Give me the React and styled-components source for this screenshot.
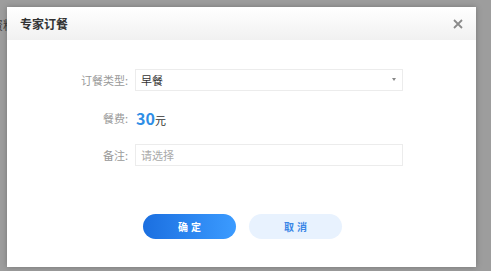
import React from 'react';
import styled, { createGlobalStyle } from 'styled-components';

const GlobalStyle = createGlobalStyle`
  html, body {
    margin: 0;
    padding: 0;
    background: #9d9d9d;
    font-family: "Noto Sans CJK SC", "Noto Sans", "Liberation Sans", sans-serif;
  }
`;

const Stage = styled.div`
  position: relative;
  width: 491px;
  height: 271px;
  overflow: hidden;
  background: #9d9d9d;
  padding: 7px 0 0 7px;
  box-sizing: border-box;
`;

// page text showing through the overlay
const BackText = styled.span`
  position: absolute;
  left: -9px;
  top: 16px;
  font-size: 12px;
  color: #3c3c3c;
`;

const Dialog = styled.div`
  position: relative;
  width: 469px;
  height: 260px;
  background: #fff;
  box-shadow: 0 0 6px rgba(0, 0, 0, 0.25);
  display: flex;
  flex-direction: column;
`;

const Header = styled.div`
  height: 33px;
  display: flex;
  align-items: center;
  justify-content: space-between;
  padding: 0 12px 0 13px;
  background: linear-gradient(#ffffff, #f1f1f1);
`;

const Title = styled.h1`
  margin: 0;
  font-size: 12px;
  font-weight: bold;
  color: #333;
`;

const CloseButton = styled.button`
  border: none;
  background: none;
  padding: 0;
  width: 12px;
  height: 12px;
  display: flex;
  align-items: center;
  justify-content: center;
  cursor: pointer;
`;

const Form = styled.div`
  display: flex;
  flex-direction: column;
  padding-top: 29px;
`;

const Row = styled.div`
  display: flex;
  align-items: center;
  height: ${(p) => p.h || 22}px;
  margin-bottom: ${(p) => p.mb || 0}px;
`;

const Label = styled.span`
  width: 121px;
  text-align: right;
  font-size: 11px;
  color: #999;
  margin-right: 7px;
`;

const Field = styled.div`
  width: 268px;
  height: 22px;
  box-sizing: border-box;
  border: 1px solid #ececec;
  display: flex;
  align-items: center;
  justify-content: space-between;
  padding: 0 6px 0 5px;
  font-size: 11px;
  color: ${(p) => (p.placeholder ? '#aaa' : '#333')};
`;

const Arrow = styled.span`
  width: 0;
  height: 0;
  border-left: 2px solid transparent;
  border-right: 2px solid transparent;
  border-top: 3px solid #888;
  margin-top: -2px;
`;

const Price = styled.span`
  font-size: 16px;
  font-weight: bold;
  color: #2f8ee6;
  margin-left: 1px;
`;

const Unit = styled.span`
  font-size: 11px;
  color: #333;
  margin-top: 4px;
`;

const Actions = styled.div`
  display: flex;
  justify-content: flex-start;
  gap: 13px;
  padding-left: 136px;
  margin-top: 48px;
`;

const Button = styled.button`
  width: 93px;
  height: 25px;
  border: none;
  border-radius: 13px;
  font-family: inherit;
  font-size: 10px;
  font-weight: bold;
  letter-spacing: 3px;
  text-indent: 3px;
  cursor: pointer;
  color: ${(p) => (p.primary ? '#fff' : '#3a86e6')};
  background: ${(p) =>
    p.primary ? 'linear-gradient(90deg, #1b6fe0, #3b9bff)' : '#e8f2fe'};
`;

export default function App() {
  return (
    <>
      <GlobalStyle />
      <Stage>
        <BackText>资料</BackText>
        <Dialog>
          <Header>
            <Title>专家订餐</Title>
            <CloseButton>
              <svg width="10" height="10" viewBox="0 0 10 10">
                <path d="M1 1L9 9M9 1L1 9" stroke="#8a8a8a" strokeWidth="1.8" />
              </svg>
            </CloseButton>
          </Header>
          <Form>
            <Row mb={16}>
              <Label>订餐类型:</Label>
              <Field>
                早餐
                <Arrow />
              </Field>
            </Row>
            <Row h={22} mb={15}>
              <Label>餐费:</Label>
              <Price>30</Price>
              <Unit>元</Unit>
            </Row>
            <Row>
              <Label>备注:</Label>
              <Field placeholder="1">请选择</Field>
            </Row>
          </Form>
          <Actions>
            <Button primary>确定</Button>
            <Button>取消</Button>
          </Actions>
        </Dialog>
      </Stage>
    </>
  );
}
